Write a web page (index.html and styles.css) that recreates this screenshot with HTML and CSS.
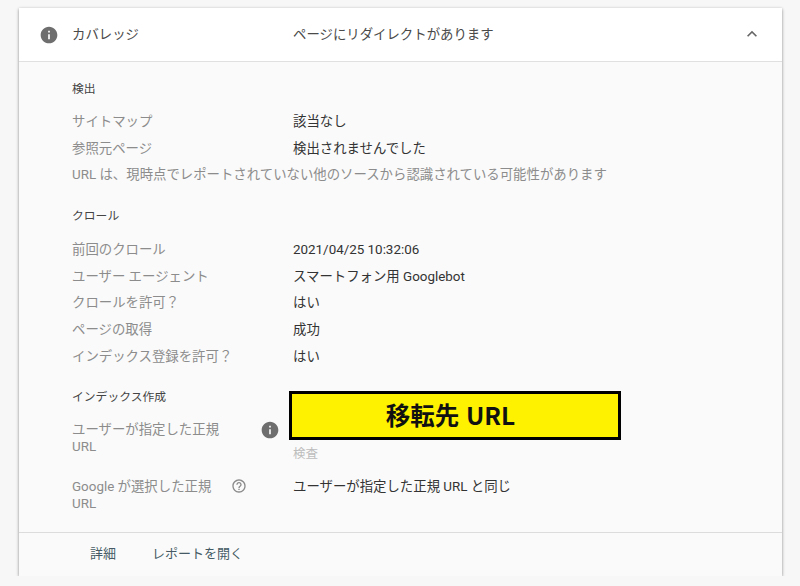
FILE: index.html
```html
<!DOCTYPE html>
<html lang="ja">
<head>
    <meta charset="UTF-8">
    <meta name="viewport" content="width=device-width, initial-scale=1.0">
    <title>カバレッジ</title>
    <link rel="stylesheet" href="styles.css">
</head>
<body>
    <div class="card">
        <div class="card-header">
            <svg class="icon-info" viewBox="0 0 24 24"><path d="M12 2C6.48 2 2 6.48 2 12s4.48 10 10 10 10-4.48 10-10S17.52 2 12 2zm1 15h-2v-6h2v6zm0-8h-2V7h2v2z"/></svg>
            <div class="header-title">カバレッジ</div>
            <div class="header-status">ページにリダイレクトがあります</div>
            <svg class="icon-chevron" viewBox="0 0 24 24"><path d="M12 8l-6 6 1.41 1.41L12 10.83l4.59 4.58L18 14z"/></svg>
        </div>

        <div class="card-body">
            <h3 class="section-title">検出</h3>
            <div class="row"><div class="label">サイトマップ</div><div class="value">該当なし</div></div>
            <div class="row"><div class="label">参照元ページ</div><div class="value">検出されませんでした</div></div>
            <p class="note">URL は、現時点でレポートされていない他のソースから認識されている可能性があります</p>

            <h3 class="section-title crawl">クロール</h3>
            <div class="row"><div class="label">前回のクロール</div><div class="value">2021/04/25 10:32:06</div></div>
            <div class="row"><div class="label">ユーザー エージェント</div><div class="value">スマートフォン用 Googlebot</div></div>
            <div class="row"><div class="label">クロールを許可？</div><div class="value">はい</div></div>
            <div class="row"><div class="label">ページの取得</div><div class="value">成功</div></div>
            <div class="row"><div class="label">インデックス登録を許可？</div><div class="value">はい</div></div>

            <h3 class="section-title index">インデックス作成</h3>
            <div class="row tall first">
                <div class="label with-icon">
                    <span class="label-text">ユーザーが指定した正規 URL</span>
                    <svg class="icon-info small" viewBox="0 0 24 24"><path d="M12 2C6.48 2 2 6.48 2 12s4.48 10 10 10 10-4.48 10-10S17.52 2 12 2zm1 15h-2v-6h2v6zm0-8h-2V7h2v2z"/></svg>
                </div>
                <div class="value">
                    <div class="redirect-box">移転先 URL</div>
                    <a class="inspect">検査</a>
                </div>
            </div>
            <div class="row tall">
                <div class="label with-icon">
                    <span class="label-text google">Google が選択した正規 URL</span>
                    <svg class="icon-help" viewBox="0 0 24 24"><path d="M11 18h2v-2h-2v2zm1-16C6.48 2 2 6.48 2 12s4.48 10 10 10 10-4.48 10-10S17.52 2 12 2zm0 18c-4.41 0-8-3.59-8-8s3.59-8 8-8 8 3.59 8 8-3.59 8-8 8zm0-14c-2.21 0-4 1.79-4 4h2c0-1.1.9-2 2-2s2 .9 2 2c0 2-3 1.75-3 5h2c0-2.25 3-2.5 3-5 0-2.21-1.79-4-4-4z"/></svg>
                </div>
                <div class="value">ユーザーが指定した正規 URL と同じ</div>
            </div>
        </div>

        <div class="card-footer">
            <a class="footer-link">詳細</a>
            <a class="footer-link">レポートを開く</a>
        </div>
    </div>
</body>
</html>
```

FILE: styles.css
```css
* {
    margin: 0;
    padding: 0;
    box-sizing: border-box;
}

body {
    font-family: Roboto, "Noto Sans CJK JP", sans-serif;
    font-size: 13.4px;
    background: #f7f7f7;
    color: #333;
    padding: 8px 18px 0 19px;
}

.card {
    background: #fafafa;
    height: 568px;
    display: flex;
    flex-direction: column;
    box-shadow: 0 1px 3px rgba(0, 0, 0, 0.45);
}

.card-header {
    height: 54px;
    flex: none;
    display: flex;
    align-items: center;
    background: #fff;
    border-bottom: 1px solid #e0e0e0;
    padding: 0 20px 3px 20px;
}

.icon-info {
    width: 20px;
    height: 20px;
    fill: #6e6e6e;
    flex: none;
    margin-top: 3px;
}

.header-title {
    width: 221px;
    margin-left: 13px;
    color: #4a4a4a;
}

.header-status {
    flex: 1;
    color: #4a4a4a;
}

.icon-chevron {
    width: 20px;
    height: 20px;
    fill: #666;
    margin-top: 2px;
}

.card-body {
    flex: 1;
    padding: 0 53px;
}

.section-title {
    font-size: 11.8px;
    font-weight: 400;
    line-height: 18px;
    margin-top: 18px;
    margin-bottom: 11px;
    color: #444;
}

.section-title.crawl {
    margin-top: 18.5px;
    margin-bottom: 12px;
}

.section-title.index {
    margin-top: 18px;
    margin-bottom: 15px;
}

.row {
    display: flex;
    min-height: 26.6px;
    line-height: 26.6px;
}

.label {
    width: 221px;
    flex: none;
    color: #8c8c8c;
}

.value {
    flex: 1;
}

.note {
    line-height: 26.6px;
    color: #8c8c8c;
}

.row.tall {
    line-height: 17px;
}

.row.tall.first {
    height: 57px;
    position: relative;
}

.with-icon {
    display: flex;
    align-items: flex-start;
}

.label-text {
    width: 170px;
}

.label-text.google {
    width: 158px;
}

.icon-info.small {
    width: 20px;
    height: 20px;
    margin-left: 18px;
    margin-top: -1px;
}

.icon-help {
    width: 16px;
    height: 16px;
    fill: #8a8a8a;
    margin-left: 1px;
}

/* pasted over the real value, like a marker on the screenshot */
.redirect-box {
    position: absolute;
    left: 217px;
    top: -30px;
    width: 332px;
    height: 49px;
    padding-right: 9px;
    background: #fff200;
    border: 3px solid #000;
    color: #111;
    font-family: "Noto Sans CJK JP", sans-serif;
    font-size: 24.5px;
    font-weight: 700;
    word-spacing: 1px;
    line-height: 41px;
    text-align: center;
}

.inspect {
    display: block;
    padding-top: 24px;
    color: #bdbdbd;
    font-size: 12.5px;
}

.card-footer {
    height: 44px;
    flex: none;
    display: flex;
    align-items: center;
    gap: 36px;
    padding: 0 0 4px 71px;
    border-top: 1px solid #dcdcdc;
}

.footer-link {
    color: #455a64;
    font-size: 13px;
}
```
